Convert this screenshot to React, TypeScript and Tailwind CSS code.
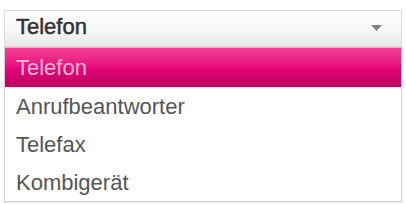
import React from "react";

export default function App() {
  const items = ["Anrufbeantworter", "Telefax", "Kombigerät"];
  return (
    <div
      className="w-[406px] h-[204px] bg-white pt-[10px] px-[4px]"
      style={{ fontFamily: '"Liberation Sans", Arial, sans-serif' }}
    >
      <div className="w-[398px]">
        <div className="h-[37px] border border-[#dcdcdc] bg-gradient-to-b from-white via-[#f8f8f8] to-[#e6ebe6] flex items-center justify-between pl-[11px] pr-[19px] pb-[4px]">
          <span className="text-[22px] text-[#333333] [-webkit-text-stroke:0.5px_#333333]">Telefon</span>
          <svg width="11" height="6" viewBox="0 0 11 6" className="mt-[3px]">
            <path d="M0 0 L11 0 L5.5 6 Z" fill="#808080" />
          </svg>
        </div>
        <div className="border border-t-0 border-[#d0d0d0] shadow-[0_1px_2px_rgba(0,0,0,0.08)]">
          <div className="h-[40px] flex items-center pl-[11px] bg-gradient-to-b from-[#f43c95] via-[#e5077a] to-[#bd0060] border-t border-[#f7a6cc]">
            <span className="text-[22px] text-[#f9b8d8]">Telefon</span>
          </div>
          {items.map((t) => (
            <div key={t} className="h-[38px] flex items-center pl-[11px] bg-white">
              <span className="text-[22px] text-[#555555]">{t}</span>
            </div>
          ))}
        </div>
      </div>
    </div>
  );
}
